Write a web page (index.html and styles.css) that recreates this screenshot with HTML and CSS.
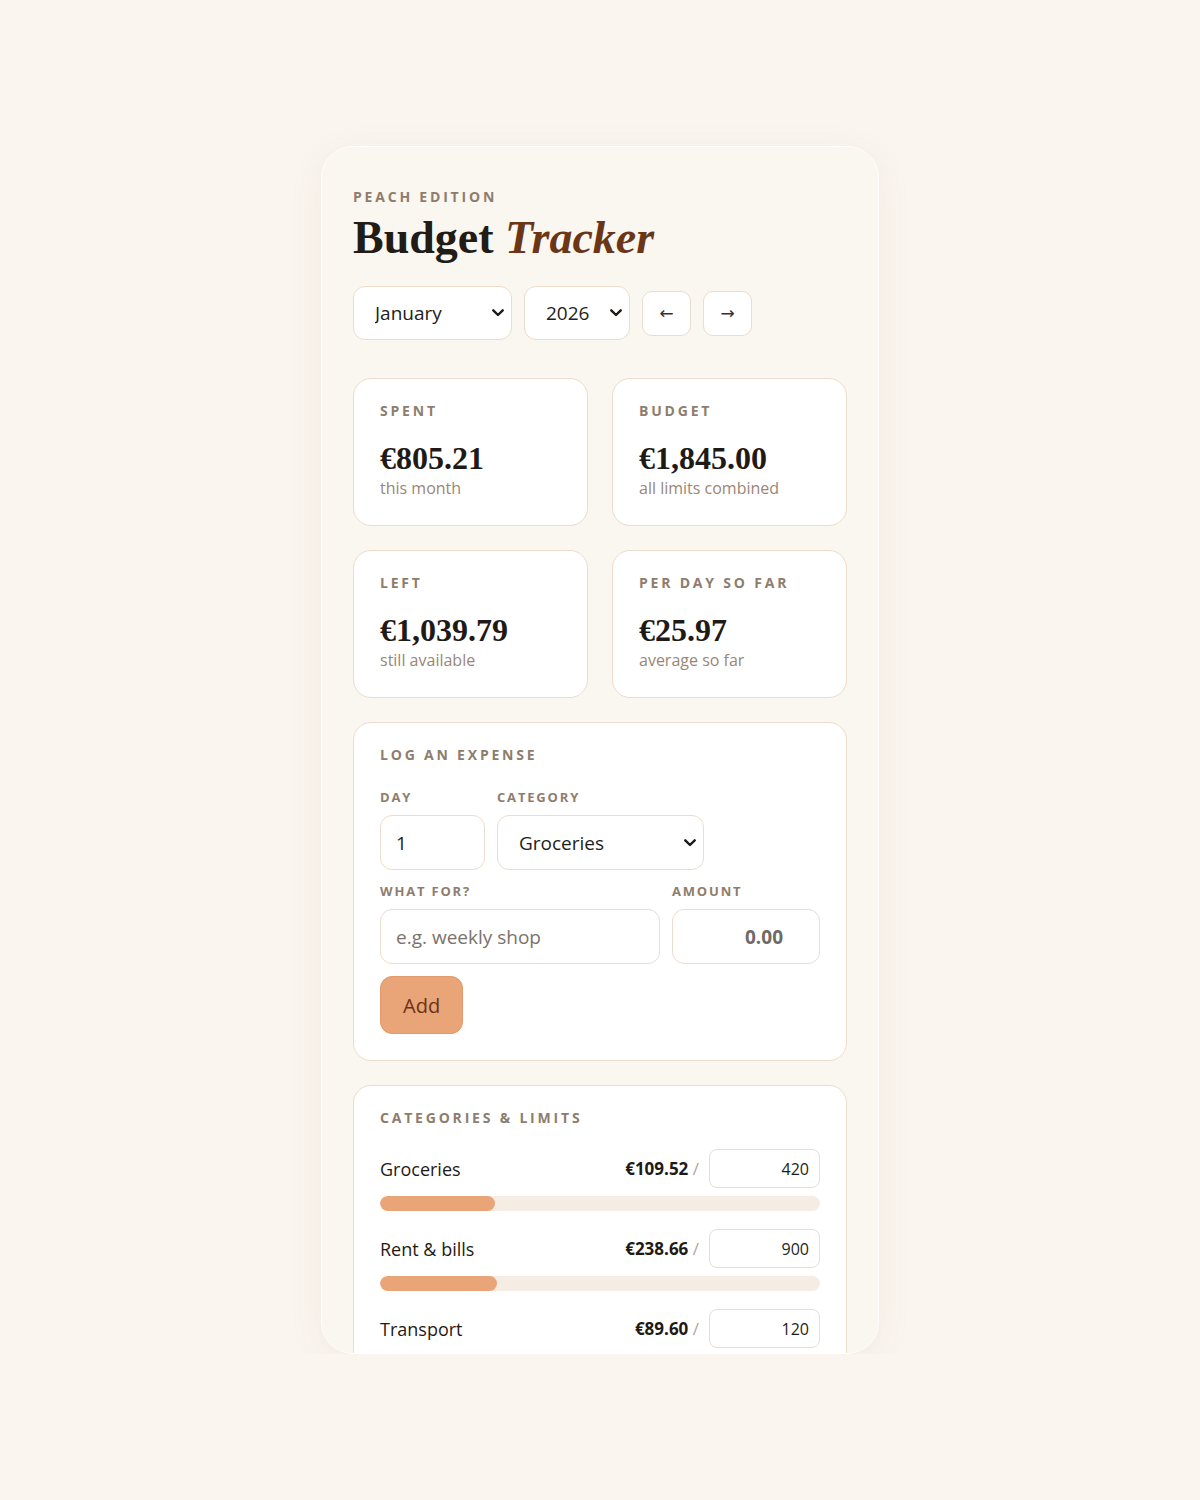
FILE: index.html
```html
<!DOCTYPE html>
<html lang="en">
<head>
    <meta charset="UTF-8">
    <meta name="viewport" content="width=device-width, initial-scale=1.0">
    <title>Budget Tracker</title>
    <link rel="stylesheet" href="styles.css">
</head>
<body>
<div class="app">
    <header>
        <p class="eyebrow">Peach edition</p>
        <h1>Budget <em>Tracker</em></h1>
        <div class="period">
            <select class="month-select">
                <option>January</option>
                <option>February</option>
                <option>March</option>
            </select>
            <select class="year-select">
                <option>2026</option>
                <option>2025</option>
            </select>
            <button type="button" class="nav-btn">&larr;</button>
            <button type="button" class="nav-btn">&rarr;</button>
        </div>
    </header>

    <section class="stats">
        <div class="stat">
            <p class="caps">Spent</p>
            <p class="stat-value">€805.21</p>
            <p class="stat-note">this month</p>
        </div>
        <div class="stat">
            <p class="caps">Budget</p>
            <p class="stat-value">€1,845.00</p>
            <p class="stat-note">all limits combined</p>
        </div>
        <div class="stat">
            <p class="caps">Left</p>
            <p class="stat-value">€1,039.79</p>
            <p class="stat-note">still available</p>
        </div>
        <div class="stat">
            <p class="caps">Per day so far</p>
            <p class="stat-value">€25.97</p>
            <p class="stat-note">average so far</p>
        </div>
    </section>

    <section class="panel">
        <p class="caps">Log an expense</p>
        <form class="expense-form">
            <div class="row row-top">
                <div class="field">
                    <label for="day">Day</label>
                    <input type="text" id="day" value="1">
                </div>
                <div class="field">
                    <label for="category">Category</label>
                    <select id="category">
                        <option>Groceries</option>
                        <option>Rent &amp; bills</option>
                        <option>Transport</option>
                    </select>
                </div>
            </div>
            <div class="row row-bottom">
                <div class="field">
                    <label for="what">What for?</label>
                    <input type="text" id="what" placeholder="e.g. weekly shop">
                </div>
                <div class="field">
                    <label for="amount">Amount</label>
                    <input type="text" id="amount" class="amount" placeholder="0.00">
                </div>
            </div>
            <button type="button" class="add-btn">Add</button>
        </form>
    </section>

    <section class="panel">
        <p class="caps">Categories &amp; limits</p>
        <div class="limits">
            <div class="limit">
                <div class="limit-head">
                    <span class="limit-name">Groceries</span>
                    <span class="limit-spent">€109.52 <span class="slash">/</span></span>
                    <input type="text" class="limit-input" value="420">
                </div>
                <div class="bar"><div class="bar-fill" style="width: 26.1%"></div></div>
            </div>
            <div class="limit">
                <div class="limit-head">
                    <span class="limit-name">Rent &amp; bills</span>
                    <span class="limit-spent">€238.66 <span class="slash">/</span></span>
                    <input type="text" class="limit-input" value="900">
                </div>
                <div class="bar"><div class="bar-fill" style="width: 26.5%"></div></div>
            </div>
            <div class="limit">
                <div class="limit-head">
                    <span class="limit-name">Transport</span>
                    <span class="limit-spent">€89.60 <span class="slash">/</span></span>
                    <input type="text" class="limit-input" value="120">
                </div>
                <div class="bar"><div class="bar-fill" style="width: 74.7%"></div></div>
            </div>
        </div>
    </section>
</div>
</body>
</html>
```

FILE: styles.css
```css
body {
    margin: 0;
    background-color: #faf5ef;
    font-family: "Open Sans", "Noto Sans", sans-serif;
    color: #231d18;
}
p {
    margin: 0;
}
.app {
    box-sizing: border-box;
    width: 558px;
    height: 1208px;
    margin: 146px auto 0;
    padding: 40px 31px;
    overflow: hidden;
    background-color: #faf6f0;
    border: 1px solid #ffffff;
    border-radius: 32px;
    box-shadow: 0 8px 36px rgba(140, 100, 60, 0.07);
}
.eyebrow,
.caps {
    font-size: 14px;
    font-weight: 700;
    letter-spacing: 0.2em;
    text-transform: uppercase;
    color: #8e7d6d;
}
h1 {
    margin: 4px 0 20px;
    font-family: "Liberation Serif", "DejaVu Serif", serif;
    font-size: 46px;
    font-weight: 700;
    line-height: 56px;
    color: #221c17;
}
h1 em {
    color: #6b3618;
}
.period {
    display: flex;
    align-items: center;
    gap: 12px;
}
select,
input {
    box-sizing: border-box;
    font-family: inherit;
    font-size: 19px;
    color: #231d18;
    background-color: #fff;
    border: 1px solid #ecdccb;
    border-radius: 12px;
    outline: none;
}
select {
    appearance: none;
    -webkit-appearance: none;
    height: 54px;
    padding: 0 30px 0 21px;
    background-image: url("data:image/svg+xml,%3Csvg xmlns='http://www.w3.org/2000/svg' width='12' height='8' viewBox='0 0 12 8'%3E%3Cpath d='M1.3 1.3 6 6l4.7-4.7' fill='none' stroke='%231f1a16' stroke-width='2.4' stroke-linecap='round' stroke-linejoin='round'/%3E%3C/svg%3E");
    background-repeat: no-repeat;
    background-position: right 7px center;
}
.month-select {
    width: 159px;
}
.year-select {
    width: 106px;
}
.nav-btn {
    width: 49px;
    height: 45px;
    padding: 0;
    font-family: "DejaVu Sans", sans-serif;
    font-size: 17px;
    color: #3a302a;
    background-color: #fff;
    border: 1px solid #ecdccb;
    border-radius: 10px;
}

/* карточки со сводкой */
.stats {
    display: grid;
    grid-template-columns: 1fr 1fr;
    gap: 24px;
    margin-top: 38px;
}
.stat {
    box-sizing: border-box;
    height: 148px;
    padding: 22px 26px;
    background-color: #fff;
    border: 1px solid #ecdccb;
    border-radius: 18px;
}
.stat-value {
    margin-top: 21px;
    font-family: "Liberation Serif", "DejaVu Serif", serif;
    font-size: 32px;
    font-weight: 700;
    line-height: 34px;
    color: #1f1a16;
}
.stat-note {
    margin-top: 2px;
    font-size: 16px;
    color: #9a8676;
}

.panel {
    margin-top: 24px;
    padding: 22px 26px 26px;
    background-color: #fff;
    border: 1px solid #ecdccb;
    border-radius: 18px;
}
.expense-form {
    margin-top: 24px;
}
.row {
    display: grid;
    gap: 12px;
    margin-bottom: 12px;
}
.row-top {
    grid-template-columns: 105px 207px;
}
.row-bottom {
    grid-template-columns: 1fr 148px;
}
.field label {
    display: block;
    margin-bottom: 9px;
    font-size: 13px;
    font-weight: 700;
    letter-spacing: 0.14em;
    text-transform: uppercase;
    color: #8e7d6d;
}
.field input,
.field select {
    width: 100%;
    height: 55px;
    padding: 0 15px;
}
.field select {
    padding-left: 21px;
}
input::placeholder {
    color: #7b726c;
}
.amount {
    text-align: right;
    padding-right: 36px !important;
    font-weight: 700;
}
.amount::placeholder {
    color: #6f6a66;
}
.add-btn {
    height: 58px;
    padding: 0 22px;
    font-family: inherit;
    font-size: 20px;
    color: #6a3315;
    background-color: #e9a478;
    border: 1px solid #e49a6b;
    border-radius: 12px;
}

/* лимиты по категориям */
.limits {
    margin-top: 22px;
}
.limit {
    margin-bottom: 18px;
}
.limit-head {
    display: flex;
    align-items: center;
    gap: 10px;
}
.limit-name {
    flex: 1;
    font-size: 18px;
    color: #1f1a16;
}
.limit-spent {
    font-size: 17px;
    font-weight: 700;
    color: #1f1a16;
}
.slash {
    font-weight: 400;
    color: #b5a596;
}
.limit-input {
    width: 111px;
    height: 39px;
    padding: 0 10px;
    font-size: 16px;
    text-align: right;
    border-radius: 8px;
}
.bar {
    height: 15px;
    margin-top: 8px;
    background-color: #f5ece3;
    border-radius: 8px;
    overflow: hidden;
}
.bar-fill {
    height: 100%;
    background-color: #e9a478;
    border-radius: 8px;
}
```
